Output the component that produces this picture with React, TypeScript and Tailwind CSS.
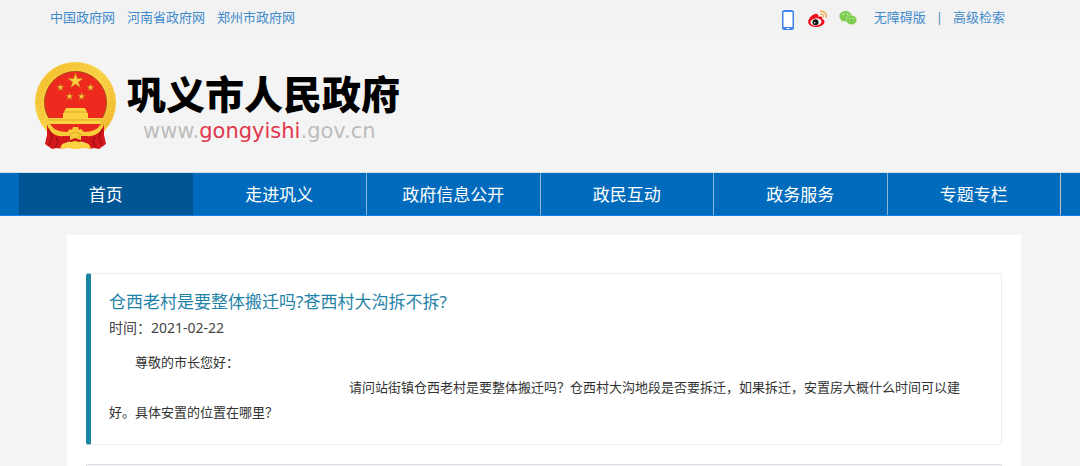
import { FaWeixin } from 'react-icons/fa';

const siteLinks = ['中国政府网', '河南省政府网', '郑州市政府网'];

const navItems = ['首页', '走进巩义', '政府信息公开', '政民互动', '政务服务', '专题专栏'];

// Five-pointed star centred on (cx, cy)
const starPoints = (cx: number, cy: number, r: number) =>
  Array.from({ length: 10 }, (_, i) => {
    const radius = i % 2 === 0 ? r : r * 0.38;
    const angle = (Math.PI / 5) * i - Math.PI / 2;
    return `${(cx + radius * Math.cos(angle)).toFixed(2)},${(cy + radius * Math.sin(angle)).toFixed(2)}`;
  }).join(' ');

function Emblem() {
  return (
    <svg viewBox="0 0 82 88" className="h-[88px] w-[82px] shrink-0" aria-hidden="true">
      <defs>
        <linearGradient id="gold" x1="0" y1="0" x2="1" y2="1">
          <stop offset="0" stopColor="#f3bd2a" />
          <stop offset="0.5" stopColor="#fbd54a" />
          <stop offset="1" stopColor="#efb428" />
        </linearGradient>
      </defs>
      <circle cx="40.5" cy="40.5" r="40.5" fill="url(#gold)" />
      <circle cx="40.5" cy="40.5" r="36" fill="none" stroke="#d99a1c" strokeWidth="5" strokeDasharray="1 3" opacity="0.25" />
      <circle cx="40.5" cy="40.5" r="31" fill="#ee2a1e" stroke="#a9491a" strokeWidth="1" />
      <g fill="#f9cf3c" stroke="#c4731c" strokeWidth="0.5">
        <polygon points={starPoints(40.5, 19, 8)} />
        <polygon points={starPoints(25.5, 25.5, 3.7)} />
        <polygon points={starPoints(55.5, 25.5, 3.7)} />
        <polygon points={starPoints(34.5, 34.5, 3.7)} />
        <polygon points={starPoints(46.5, 34.5, 3.7)} />
      </g>
      {/* Gate */}
      <path d="M31 46h19l2 4v1h1v5h15l-3 6H16l-3-6h15v-5h1v-1z" fill="#fbd341" />
      <path d="M29 50h23M14 58h53" stroke="#dc9b22" strokeWidth="0.8" />
      <path d="M15 62h51l-5 6c-6 5-9 4-12 1l-4-1-4-2-5 2-4 1c-3 3-6 4-12-1z" fill="#e8281d" />
      {/* Ribbons */}
      <path d="M12 61c1 8 7 12 15 13h8v5l-6 3-2 5-5-1-5 1-7-5 2-9z" fill="#d3181b" />
      <path d="M69 61c-1 8-7 12-15 13h-8v5l6 3 2 5 5-1 5 1 7-5-2-9z" fill="#d3181b" />
      <path d="M14 66l3 9-3 8M21 75l2 5-3 5M67 66l-3 9 3 8M60 75l-2 5 3 5" fill="none" stroke="#9e0f12" strokeWidth="1.2" />
      <path
        d="M12 61c5 6 13 9 20 9l3-3 2 1 1-3h5l1 3 2-1 3 3c7 0 15-3 20-9-2 9-9 14-18 13l-6-1-5 3-5-3-6 1c-9 1-15-4-17-13z"
        fill="#f8cb38"
      />
      <path d="M25 87c1-5 4-7 8-6l7-3 8 3c4-1 7 1 8 6l-8-1-5 1h-5l-5-1z" fill="#fbd341" />
      <path d="M33 79l7-3 8 3-4 1-4-1-4 1z" fill="#c91519" />
      <path d="M34 73l6-3 7 3" fill="none" stroke="#dc9b22" strokeWidth="0.8" />
    </svg>
  );
}

function WeiboIcon() {
  return (
    <svg viewBox="0 0 20 18" className="h-[18px] w-5" aria-hidden="true">
      <path
        d="M8.500 3.800c-2.500-.6-8.300 3.700-8.300 8.200 0 3.200 4 5 8 5 4.800 0 8.300-2.700 8.300-5.300 0-1.500-1.100-2.400-2.300-2.800.6-1.700-.6-3-3.900-1.900.6-1.600-.2-2.900-1.800-3.200z"
        fill="#f0101a"
      />
      <ellipse cx="8" cy="12" rx="5.500" ry="3.600" fill="#fff" transform="rotate(-8 8 12)" />
      <circle cx="7.500" cy="12.200" r="3" fill="#111" />
      <circle cx="6.700" cy="12.800" r="0.800" fill="#fff" />
      <path d="M12.500 1.300c3.600-.6 6.500 2.300 5.600 6" fill="none" stroke="#f7a94a" strokeWidth="1.500" strokeLinecap="round" />
      <path d="M12.800 4c1.700-.3 3 1 2.500 2.700" fill="none" stroke="#f7a94a" strokeWidth="1.300" strokeLinecap="round" />
    </svg>
  );
}

function PhoneIcon() {
  return (
    <svg viewBox="0 0 12 20" className="h-5 w-3" aria-hidden="true">
      <rect x="0" y="0" width="12" height="20" rx="2.500" fill="#3f83ea" />
      <rect x="1.500" y="2" width="9" height="15" rx="0.500" fill="#fff" />
      <rect x="4.500" y="18" width="3" height="1" fill="#fff" />
    </svg>
  );
}

function TopBar() {
  return (
    <div className="flex h-[33px] items-start justify-between bg-[#f2f2f2] pl-[50px] pr-[75px] text-[13px] leading-5 text-[#428bca]">
      <div className="flex gap-3 pt-[7px]">
        {siteLinks.map((link) => (
          <a key={link} href="#">
            {link}
          </a>
        ))}
      </div>
      <div className="flex pt-[7px]">
        <div className="flex items-start gap-[14px] pr-4 pt-[3px]">
          <a href="#" aria-label="手机版">
            <PhoneIcon />
          </a>
          <a href="#" aria-label="微博">
            <WeiboIcon />
          </a>
          <a href="#" aria-label="微信" className="-ml-1">
            <FaWeixin className="h-4 w-5 text-[#7fce50]" />
          </a>
        </div>
        <a href="#">无障碍版</a>
        <span className="px-[10px]">|</span>
        <a href="#">高级检索</a>
      </div>
    </div>
  );
}

function Header() {
  return (
    <header className="flex items-start gap-[10px] pb-[22px] pl-[35px] pt-[29px]">
      <Emblem />
      <div className="pt-[7px]">
        <h1 className="text-[39px] font-black leading-[50px] text-black">巩义市人民政府</h1>
        <p className="pl-4 font-['DejaVu_Sans',sans-serif] text-[21px] leading-6 text-[#bdbdbd]">
          www.<span className="text-[#e0364c]">gongyishi</span>.gov.cn
        </p>
      </div>
    </header>
  );
}

function NavBar() {
  return (
    <nav className="border-b border-t border-b-[#1080ec] border-t-[#d5e0e8] bg-[#006bbd] px-[19px]">
      <ul className="grid grid-cols-6 border-r border-[#b5c3cf]">
        {navItems.map((item, i) => (
          <li key={item} className={i > 1 ? 'border-l border-[#8fb5d4]' : ''}>
            <a
              href="#"
              className={`flex h-[42px] items-center justify-center pt-[2px] text-[17px] text-white ${i === 0 ? 'bg-[#005594]' : ''}`}
            >
              {item}
            </a>
          </li>
        ))}
      </ul>
    </nav>
  );
}

export default function App() {
  return (
    <div className="min-h-screen bg-[#f4f4f4] font-['Noto_Sans','Noto_Sans_CJK_SC',sans-serif]">
      <TopBar />
      <Header />
      <NavBar />
      <main className="pl-[67px] pr-[59px] pt-[19px]">
        <div className="bg-white px-[19px] pt-[38px]">
          {/* Question */}
          <article className="rounded-[3px] border border-l-[5px] border-[#eeeeee] border-l-[#1a85a3] pb-[19px] pl-[18px] pr-8 pt-4">
            <h2 className="text-[17px] leading-6 text-[#1f83a8]">仓西老村是要整体搬迁吗?苍西村大沟拆不拆?</h2>
            <p className="pt-1 text-[14px] leading-5 text-[#444444]">时间：2021-02-22</p>
            <div className="pt-3 text-[13px] leading-[25px] text-[#333333]">
              <p className="indent-[26px]">尊敬的市长您好：</p>
              <p className="indent-[240px]">
                请问站街镇仓西老村是要整体搬迁吗？仓西村大沟地段是否要拆迁，如果拆迁，安置房大概什么时间可以建好。具体安置的位置在哪里？
              </p>
            </div>
          </article>
          {/* Reply */}
          <section className="mt-[19px] rounded-t-[3px] border border-b-0 border-[#dcdce6] bg-[#f5f5fa] pt-px" />
        </div>
      </main>
    </div>
  );
}
